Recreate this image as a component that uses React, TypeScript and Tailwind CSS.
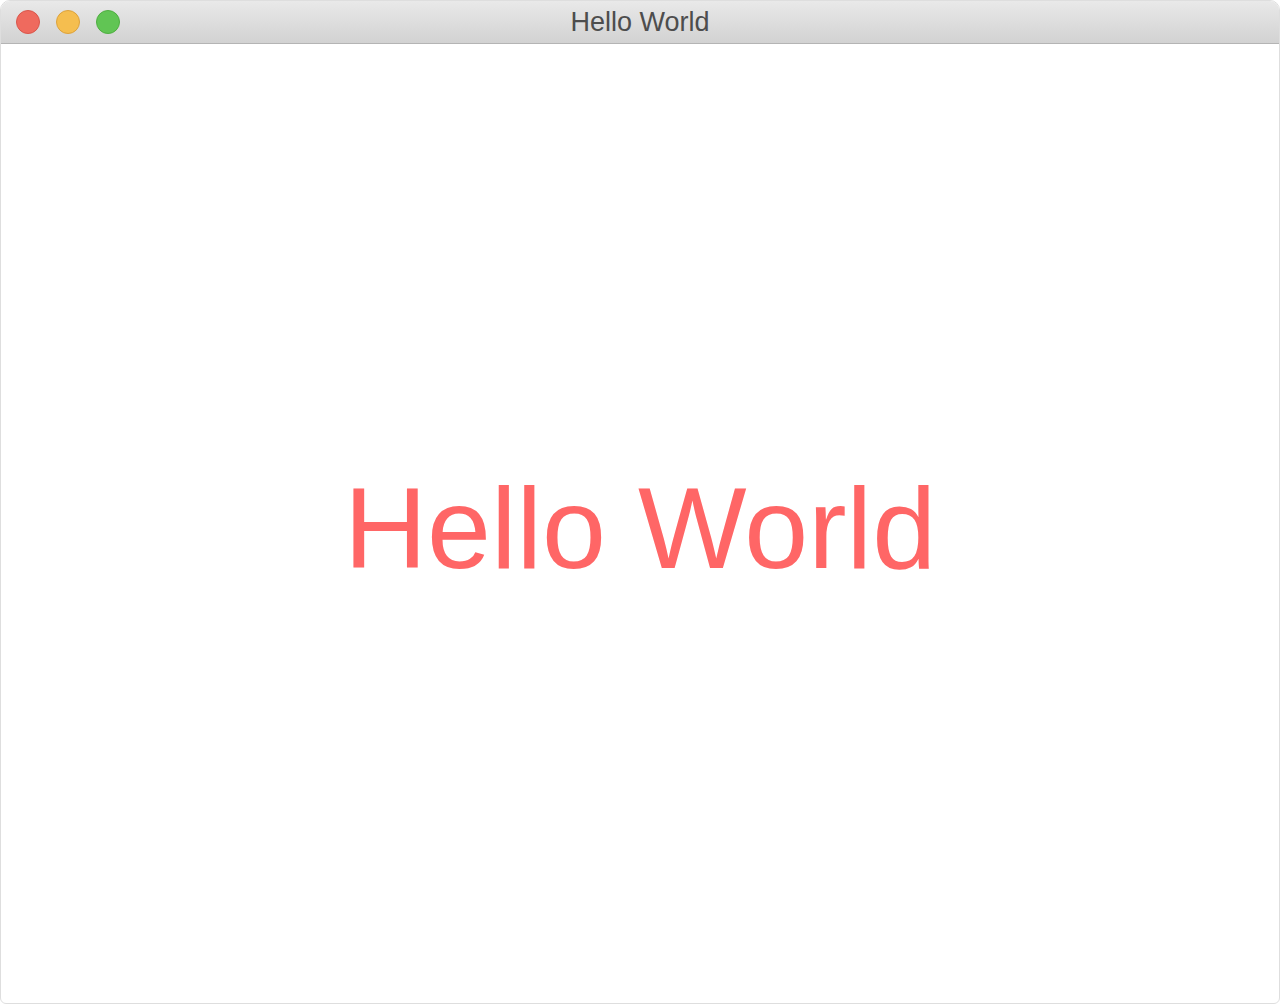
export default function App() {
  return (
    <div className="w-[1280px] h-[1004px] bg-white">
      <div className="flex h-full flex-col overflow-hidden rounded-t-[10px] rounded-b-[6px] border border-[#dedede] bg-white">
        {/* Title bar */}
        <div className="relative flex h-[43px] shrink-0 items-center justify-center border-b border-[#b4b4b4] bg-gradient-to-b from-[#e9e9e9] to-[#d2d2d2]">
          <div className="absolute left-[15px] top-[9px] flex gap-[16px]">
            <span className="h-[24px] w-[24px] rounded-full border border-[#d9564b] bg-[#ef6a5e]" />
            <span className="h-[24px] w-[24px] rounded-full border border-[#dca23c] bg-[#f5be4f]" />
            <span className="h-[24px] w-[24px] rounded-full border border-[#4fae41] bg-[#61c554]" />
          </div>
          <span className="font-['Liberation_Sans',Arial,sans-serif] text-[27px] leading-none text-[#4d4d4d]">
            Hello World
          </span>
        </div>
        {/* Content */}
        <div className="flex flex-1 items-center justify-center pt-[10px]">
          <span className="font-['Liberation_Sans',Arial,sans-serif] text-[115px] leading-none text-[#ff6666]">
            Hello World
          </span>
        </div>
      </div>
    </div>
  )
}
